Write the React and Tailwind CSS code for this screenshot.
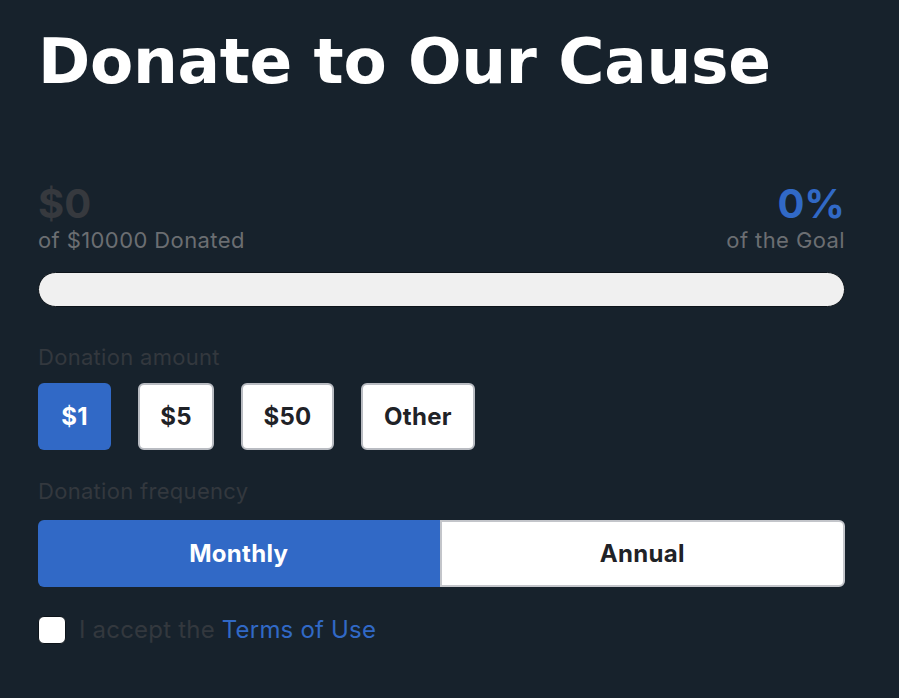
export default function App() {
  const amounts = [
    { label: "$1", w: "w-[73px]", active: true },
    { label: "$5", w: "w-[76px]" },
    { label: "$50", w: "w-[93px]" },
    { label: "Other", w: "w-[114px]" },
  ];

  return (
    <div className="min-h-[698px] w-full bg-[#17222c] pl-[38px] pr-[54px] pt-[24px] font-['Inter',sans-serif]">
      <h1 className="font-['DejaVu_Sans',sans-serif] text-[63px] font-bold leading-[76px] tracking-[-0.3px] text-white">
        Donate to Our Cause
      </h1>

      <div className="mt-[84px] flex items-end justify-between">
        <div>
          <p className="text-[40px] font-bold leading-[40px] text-[#36393e]">$0</p>
          <p className="mt-[2px] text-[22px] leading-[28px] tracking-[0.4px] text-[#6b6e72]">of $10000 Donated</p>
        </div>
        <div className="text-right">
          <p className="text-[40px] font-bold leading-[40px] text-[#3169c6]">0%</p>
          <p className="mt-[2px] text-[22px] leading-[28px] tracking-[0.4px] text-[#6b6e72]">of the Goal</p>
        </div>
      </div>

      <div className="mt-[18px] h-[35px] w-full rounded-full border border-[#0d141a] bg-[#f0f0f0]" />

      <p className="mt-[36px] text-[22px] leading-[28px] tracking-[0.3px] text-[#33383e]">Donation amount</p>
      <div className="mt-[12px] flex gap-[27px]">
        {amounts.map((a) =>
          a.active ? (
            <button
              key={a.label}
              className={`${a.w} h-[67px] rounded-[6px] bg-[#3169c6] text-[24px] font-bold tracking-[0.3px] text-white`}
            >
              {a.label}
            </button>
          ) : (
            <button
              key={a.label}
              className={`${a.w} h-[67px] rounded-[6px] border-2 border-[#b9bcc2] bg-white text-[24px] font-bold tracking-[0.3px] text-[#1f2227]`}
            >
              {a.label}
            </button>
          )
        )}
      </div>

      <p className="mt-[27px] text-[22px] leading-[28px] tracking-[0.3px] text-[#33383e]">Donation frequency</p>
      <div className="mt-[15px] flex h-[67px] w-full">
        <button className="flex-1 rounded-l-[6px] bg-[#3169c6] text-[24px] font-bold tracking-[0.3px] text-white">
          Monthly
        </button>
        <button className="flex-1 rounded-r-[6px] border-2 border-[#c3c5ca] bg-white text-[24px] font-bold tracking-[0.3px] text-[#1f2227]">
          Annual
        </button>
      </div>

      <label className="mt-[28px] flex items-center gap-[13px]">
        <span className="h-[28px] w-[28px] rounded-[6px] border border-[#0d141a] bg-white" />
        <span className="text-[24px] leading-[30px] tracking-[0.2px] text-[#33383e]">
          I accept the <span className="text-[#3169c6]">Terms of Use</span>
        </span>
      </label>
    </div>
  );
}
